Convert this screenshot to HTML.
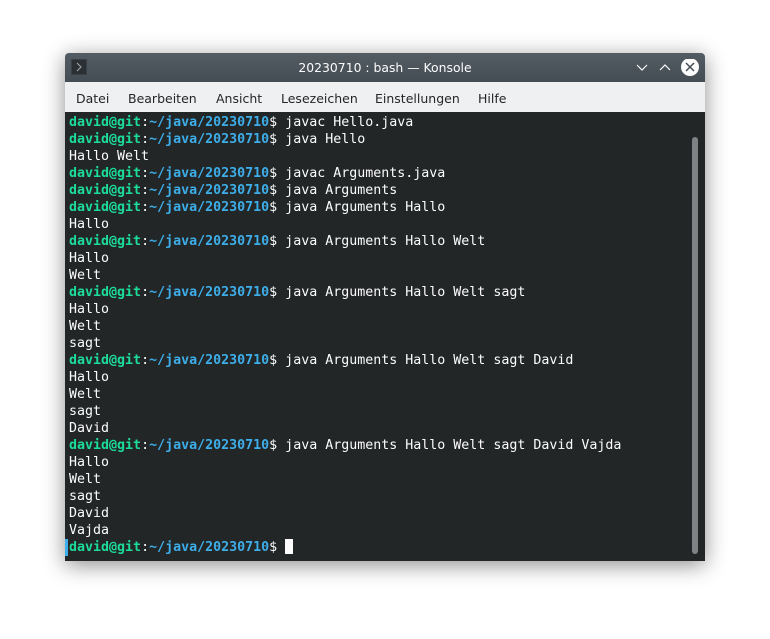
<!DOCTYPE html>
<html><head><style>
body{margin:0;width:770px;height:639px;background:#fff;overflow:hidden;position:relative}
.win{position:absolute;left:65px;top:53px;width:640px;height:508px;box-shadow:0 4px 22px rgba(0,0,0,.45);border-radius:4px 4px 0 0;overflow:hidden}
.tb{height:29px;background:linear-gradient(#535c63,#454d54);position:relative;color:#fcfcfc;font:12.4px "DejaVu Sans","Liberation Sans",sans-serif}
.tb .t{position:absolute;left:0;right:0;top:7px;text-align:center}
.ic{position:absolute;left:6px;top:6px;width:16px;height:16px;background:#2b3034;border:1px solid #3a4045;box-sizing:border-box}
.menu{height:30px;background:#eff0f1;font:12.5px "DejaVu Sans","Liberation Sans",sans-serif;color:#232627}
.menu span{position:absolute;top:38px}
.term{position:absolute;top:59px;left:0;right:0;bottom:0;background:#232627;font:13.3px/17px "DejaVu Sans Mono","Liberation Mono",monospace;color:#fcfcfc;padding:2px 0 0 4px;white-space:pre}
.g{color:#1cdc9a;font-weight:bold}.b{color:#3daee9;font-weight:bold}
.sb{position:absolute;left:627px;top:84px;width:6px;height:417px;background:#7f8284;border-radius:3px}
.cur{display:inline-block;width:8px;height:15px;background:#fcfcfc;vertical-align:-3px}
</style></head><body>
<div class="win">
<div class="tb"><div class="ic"><svg width="14" height="14" style="position:absolute;left:0;top:0"><path d="M5 3l4 4-4 4" stroke="#aaa" fill="none"/></svg></div><div class="t">20230710 : bash — Konsole</div>
<svg style="position:absolute;left:570px;top:6px" width="64" height="18"><path d="M2 6l5 5 5-5" stroke="#fcfcfc" fill="none" stroke-width="1.2"/><path d="M25 11l5-5 5 5" stroke="#fcfcfc" fill="none" stroke-width="1.2"/><circle cx="55" cy="8" r="9" fill="#fcfcfc"/><path d="M51 4l8 8M59 4l-8 8" stroke="#454d54" stroke-width="1.5"/></svg></div>
<div class="menu"><span style="left:11px">Datei</span><span style="left:63px">Bearbeiten</span><span style="left:151px">Ansicht</span><span style="left:216px">Lesezeichen</span><span style="left:310px">Einstellungen</span><span style="left:413px">Hilfe</span></div>
<div class="term"><span class="g">david@git</span>:<span class="b">~/java/20230710</span>$ javac Hello.java
<span class="g">david@git</span>:<span class="b">~/java/20230710</span>$ java Hello
Hallo Welt
<span class="g">david@git</span>:<span class="b">~/java/20230710</span>$ javac Arguments.java
<span class="g">david@git</span>:<span class="b">~/java/20230710</span>$ java Arguments
<span class="g">david@git</span>:<span class="b">~/java/20230710</span>$ java Arguments Hallo
Hallo
<span class="g">david@git</span>:<span class="b">~/java/20230710</span>$ java Arguments Hallo Welt
Hallo
Welt
<span class="g">david@git</span>:<span class="b">~/java/20230710</span>$ java Arguments Hallo Welt sagt
Hallo
Welt
sagt
<span class="g">david@git</span>:<span class="b">~/java/20230710</span>$ java Arguments Hallo Welt sagt David
Hallo
Welt
sagt
David
<span class="g">david@git</span>:<span class="b">~/java/20230710</span>$ java Arguments Hallo Welt sagt David Vajda
Hallo
Welt
sagt
David
Vajda
<span class="g">david@git</span>:<span class="b">~/java/20230710</span>$ <span class="cur"></span></div>
<div style="position:absolute;left:0;top:486px;width:3px;height:17px;background:#3daee9"></div>
<div class="sb"></div>
</div>
</body></html>
